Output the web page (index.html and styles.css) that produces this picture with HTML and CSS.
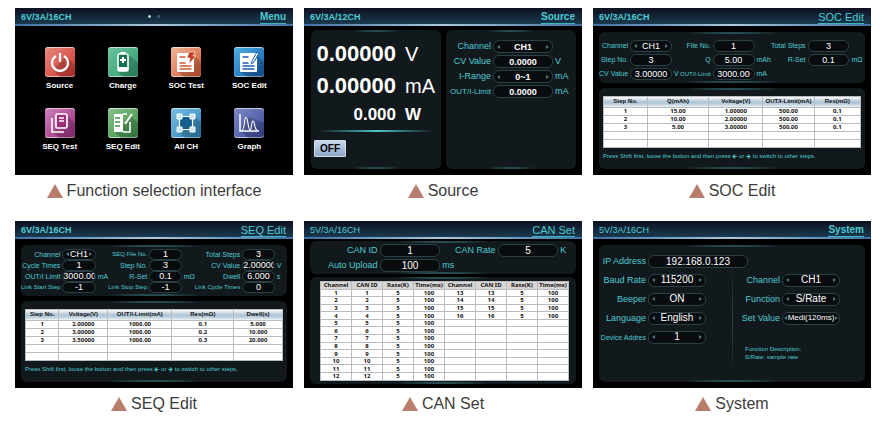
FILE: index.html
```
<!DOCTYPE html>
<html lang="en">
<head>
  <meta charset="UTF-8">
  <meta name="viewport" content="width=device-width, initial-scale=1.0">
  <title>Interface Overview</title>
  <link rel="stylesheet" href="styles.css">
</head>
<body>
  <main class="gallery">

    <!-- Menu -->
    <figure>
      <div class="screen">
        <header class="bar">
          <b>6V/3A/16CH</b>
          <span class="dots"><i class="on"></i><i></i></span>
          <strong>Menu</strong>
        </header>
        <nav class="menu">
          <a href="#source">
            <svg class="icon red" viewBox="0 0 30 30">
              <path class="shade" d="M21 9l9 9v12H15l-7-7z"/>
              <path d="M11 9a8 8 0 1 0 8 0M15 6v9" fill="none" stroke="#fff" stroke-width="2.2"/>
            </svg>
            Source
          </a>
          <a href="#charge">
            <svg class="icon green" viewBox="0 0 30 30">
              <path class="shade" d="M20 7l10 9v14H15l-5-5z"/>
              <rect x="10" y="7" width="10" height="17" rx="1.5" fill="#1a7350" stroke="#fff" stroke-width="1.6"/>
              <path d="M12.500 5h5v2h-5zM10 20h10v4H10z" fill="#fff"/>
              <path d="M15 10v6M12 13h6" stroke="#fff" stroke-width="2"/>
            </svg>
            Charge
          </a>
          <a href="#soc-test">
            <svg class="icon orange" viewBox="0 0 30 30">
              <path class="shade" d="M23 8l7 7v15H13l-6-5z"/>
              <rect x="6" y="6" width="17" height="19" rx="1" fill="#fff"/>
              <path d="M8.500 10h6M8.500 16h6M8.500 19h12M8.500 22h12" stroke="#cf5a36" stroke-width="1.300"/>
              <path d="M18 5h6l-2 4h3l-7 8 1-6h-3z" fill="#c33d1e" stroke="#fff" stroke-width=".6"/>
            </svg>
            SOC Test
          </a>
          <a href="#soc-edit">
            <svg class="icon blue" viewBox="0 0 30 30">
              <path class="shade" d="M23 8l7 7v15H13l-6-5z"/>
              <rect x="6" y="6" width="17" height="19" rx="1" fill="#fff"/>
              <path d="M8.500 10h6M8.500 16h6M8.500 19h12M8.500 22h12" stroke="#1f5fae" stroke-width="1.300"/>
              <path d="M23 5l-5 9-.5 3 2.500-2 5-9z" fill="#fff" stroke="#1a5ca8" stroke-width="1"/>
            </svg>
            SOC Edit
          </a>
          <a href="#seq-test">
            <svg class="icon purple" viewBox="0 0 30 30">
              <path class="shade" d="M22 7l8 8v15H14l-6-6z"/>
              <rect x="11" y="6" width="11" height="14" rx="1.500" fill="#9c2f76" stroke="#fff" stroke-width="1.700"/>
              <path d="M14 10h5M14 13h5M7 10v14h12" fill="none" stroke="#fff" stroke-width="1.600"/>
            </svg>
            SEQ Test
          </a>
          <a href="#seq-edit">
            <svg class="icon leaf" viewBox="0 0 30 30">
              <path class="shade" d="M23 8l7 7v15H13l-6-6z"/>
              <path d="M6 6h9v18H6z" fill="#fff"/>
              <path d="M15 6h4M15 24h7V14" fill="none" stroke="#fff" stroke-width="1.600"/>
              <path d="M7 10h5M7 14h5M7 18h5" stroke="#3f8d4a" stroke-width="1.400"/>
              <path d="M24 6l-7 10" stroke="#fff" stroke-width="2"/>
            </svg>
            SEQ Edit
          </a>
          <a href="#all">
            <svg class="icon sky" viewBox="0 0 30 30">
              <path class="shade" d="M23 7l7 7v16H14l-7-7z"/>
              <path d="M8.500 8.500h13v13h-13z" fill="#155f8f" stroke="#fff" stroke-width="1.200"/>
              <path d="M6 6h5v5H6zM19 6h5v5h-5zM6 19h5v5H6zM19 19h5v5h-5z" fill="#c9e4f3" stroke="#fff" stroke-width="1"/>
            </svg>
            All CH
          </a>
          <a href="#graph">
            <svg class="icon indigo" viewBox="0 0 30 30">
              <path class="shade" d="M12 8l18 7v15H14l-8-7z"/>
              <path d="M6 6v17h19" fill="none" stroke="#fff" stroke-width="1.500"/>
              <path d="M8 22c3 0 2-13 4-13s2 13 4 13 1-9 3-9 1 8 4 9" fill="none" stroke="#fff" stroke-width="1.100"/>
            </svg>
            Graph
          </a>
        </nav>
      </div>
      <figcaption>Function selection interface</figcaption>
    </figure>

    <!-- Source -->
    <figure>
      <div class="screen">
        <header class="bar">
          <b>6V/3A/12CH</b>
          <strong>Source</strong>
        </header>
        <div class="split">
          <section class="panel meter">
            <div class="readout">
              <span>0.00000</span><span class="unit">V</span>
              <span>0.00000</span><span class="unit">mA</span>
              <span class="power">0.000</span><span class="power">W</span>
            </div>
            <hr>
            <button type="button" class="off">OFF</button>
          </section>
          <section class="panel">
            <div class="fields source-fields">
              <label for="src-ch">Channel</label>
              <span class="pick"><select id="src-ch"><option>CH1</option></select></span>
              <span></span>
              <label for="src-cv">CV Value</label>
              <input id="src-cv" value="0.0000">
              <span>V</span>
              <label for="src-range">I-Range</label>
              <span class="pick"><select id="src-range"><option>0~1</option></select></span>
              <span>mA</span>
              <label for="src-limit" class="small">OUT/I-Limit</label>
              <input id="src-limit" value="0.0000">
              <span>mA</span>
            </div>
          </section>
        </div>
      </div>
      <figcaption>Source</figcaption>
    </figure>

    <!-- SOC Edit -->
    <figure>
      <div class="screen">
        <header class="bar">
          <b>6V/3A/16CH</b>
          <strong class="large">SOC Edit</strong>
        </header>
        <div class="stack">
          <section class="panel grow">
            <div class="fields soc-fields">
              <label for="soc-ch">Channel</label>
              <span class="pick"><select id="soc-ch"><option>CH1</option></select></span>
              <span></span>
              <label for="soc-file">File No.</label>
              <input id="soc-file" value="1">
              <span></span>
              <label for="soc-total">Total Steps</label>
              <input id="soc-total" value="3">
              <span></span>

              <label for="soc-step">Step No.</label>
              <input id="soc-step" value="3">
              <span></span>
              <label for="soc-q">Q</label>
              <input id="soc-q" value="5.00">
              <span>mAh</span>
              <label for="soc-r">R-Set</label>
              <input id="soc-r" value="0.1">
              <span>mΩ</span>

              <label for="soc-cv">CV Value</label>
              <input id="soc-cv" value="3.00000">
              <span>V</span>
              <label for="soc-limit" class="small">OUT/I-Limit</label>
              <input id="soc-limit" value="3000.00">
              <span>mA</span>
            </div>
          </section>
          <section class="panel listing">
            <table class="steps">
              <colgroup><col class="w17"><col class="w24"><col class="w21"><col class="w20"><col></colgroup>
              <thead>
                <tr><th>Step No.</th><th>Q(mAh)</th><th>Voltage(V)</th><th>OUT/I-Limit(mA)</th><th>Res(mΩ)</th></tr>
              </thead>
              <tbody>
                <tr><td>1</td><td>15.00</td><td>1.00000</td><td>500.00</td><td>0.1</td></tr>
                <tr><td>2</td><td>10.00</td><td>2.00000</td><td>500.00</td><td>0.1</td></tr>
                <tr><td>3</td><td>5.00</td><td>3.00000</td><td>500.00</td><td>0.1</td></tr>
                <tr><td></td><td></td><td></td><td></td><td></td></tr>
                <tr><td></td><td></td><td></td><td></td><td></td></tr>
              </tbody>
            </table>
            <p class="hint">Press Shift first, loose the button and then press 🡸 or 🡺 to switch to other steps.</p>
          </section>
        </div>
      </div>
      <figcaption>SOC Edit</figcaption>
    </figure>

    <!-- SEQ Edit -->
    <figure>
      <div class="screen">
        <header class="bar">
          <b>6V/3A/16CH</b>
          <strong class="large">SEQ Edit</strong>
        </header>
        <div class="stack">
          <section class="panel grow">
            <div class="fields seq-fields">
              <label for="seq-ch">Channel</label>
              <span class="pick"><select id="seq-ch"><option>CH1</option></select></span>
              <span></span>
              <label for="seq-file" class="small">SEQ File No.</label>
              <input id="seq-file" value="1">
              <span></span>
              <label for="seq-total">Total Steps</label>
              <input id="seq-total" value="3">
              <span></span>

              <label for="seq-cycle">Cycle Times</label>
              <input id="seq-cycle" value="1">
              <span></span>
              <label for="seq-step">Step No.</label>
              <input id="seq-step" value="3">
              <span></span>
              <label for="seq-cv">CV Value</label>
              <input id="seq-cv" value="2.00000">
              <span>V</span>

              <label for="seq-limit">OUT/I Limit</label>
              <input id="seq-limit" value="3000.00">
              <span>mA</span>
              <label for="seq-r">R-Set</label>
              <input id="seq-r" value="0.1">
              <span>mΩ</span>
              <label for="seq-dwell">Dwell</label>
              <input id="seq-dwell" value="6.000">
              <span>s</span>

              <label for="seq-start" class="small">Link Start Step</label>
              <input id="seq-start" value="-1">
              <span></span>
              <label for="seq-stop" class="small">Link Stop Step</label>
              <input id="seq-stop" value="-1">
              <span></span>
              <label for="seq-link" class="small">Link Cycle Times</label>
              <input id="seq-link" value="0">
              <span></span>
            </div>
          </section>
          <section class="panel listing">
            <table class="steps">
              <colgroup><col class="w13"><col class="w19"><col class="w25"><col class="w24"><col></colgroup>
              <thead>
                <tr><th>Step No.</th><th>Voltage(V)</th><th>OUT/I-Limit(mA)</th><th>Res(mΩ)</th><th>Dwell(s)</th></tr>
              </thead>
              <tbody>
                <tr><td>1</td><td>2.00000</td><td>1000.00</td><td>0.1</td><td>5.000</td></tr>
                <tr><td>2</td><td>3.00000</td><td>1000.00</td><td>0.2</td><td>10.000</td></tr>
                <tr><td>3</td><td>3.50000</td><td>1000.00</td><td>0.3</td><td>20.000</td></tr>
                <tr><td></td><td></td><td></td><td></td><td></td></tr>
                <tr><td></td><td></td><td></td><td></td><td></td></tr>
              </tbody>
            </table>
            <p class="hint">Press Shift first, loose the button and then press 🡸 or 🡺 to switch to other steps.</p>
          </section>
        </div>
      </div>
      <figcaption>SEQ Edit</figcaption>
    </figure>

    <!-- CAN Set -->
    <figure>
      <div class="screen">
        <header class="bar">
          <span>5V/3A/16CH</span>
          <strong class="large">CAN Set</strong>
        </header>
        <div class="stack tight">
          <section class="panel grow">
            <div class="fields can-fields">
              <label for="can-id">CAN ID</label>
              <input id="can-id" value="1">
              <span></span>
              <label for="can-rate">CAN Rate</label>
              <input id="can-rate" value="5">
              <span>K</span>
              <label for="can-auto">Auto Upload</label>
              <input id="can-auto" value="100">
              <span>ms</span>
            </div>
          </section>
          <section class="panel listing">
            <table class="can">
              <thead>
                <tr><th>Channel</th><th>CAN ID</th><th>Rate(K)</th><th>Time(ms)</th><th>Channel</th><th>CAN ID</th><th>Rate(K)</th><th>Time(ms)</th></tr>
              </thead>
              <tbody>
                <tr><td>1</td><td>1</td><td>5</td><td>100</td><td>13</td><td>13</td><td>5</td><td>100</td></tr>
                <tr><td>2</td><td>2</td><td>5</td><td>100</td><td>14</td><td>14</td><td>5</td><td>100</td></tr>
                <tr><td>3</td><td>3</td><td>5</td><td>100</td><td>15</td><td>15</td><td>5</td><td>100</td></tr>
                <tr><td>4</td><td>4</td><td>5</td><td>100</td><td>16</td><td>16</td><td>5</td><td>100</td></tr>
                <tr><td>5</td><td>5</td><td>5</td><td>100</td><td></td><td></td><td></td><td></td></tr>
                <tr><td>6</td><td>6</td><td>5</td><td>100</td><td></td><td></td><td></td><td></td></tr>
                <tr><td>7</td><td>7</td><td>5</td><td>100</td><td></td><td></td><td></td><td></td></tr>
                <tr><td>8</td><td>8</td><td>5</td><td>100</td><td></td><td></td><td></td><td></td></tr>
                <tr><td>9</td><td>9</td><td>5</td><td>100</td><td></td><td></td><td></td><td></td></tr>
                <tr><td>10</td><td>10</td><td>5</td><td>100</td><td></td><td></td><td></td><td></td></tr>
                <tr><td>11</td><td>11</td><td>5</td><td>100</td><td></td><td></td><td></td><td></td></tr>
                <tr><td>12</td><td>12</td><td>5</td><td>100</td><td></td><td></td><td></td><td></td></tr>
              </tbody>
            </table>
          </section>
        </div>
      </div>
      <figcaption>CAN Set</figcaption>
    </figure>

    <!-- System -->
    <figure>
      <div class="screen">
        <header class="bar">
          <span>5V/3A/16CH</span>
          <strong>System</strong>
        </header>
        <div class="stack">
          <section class="panel grow system">
            <div class="fields sys-fields">
              <label for="sys-ip">IP Address</label>
              <input id="sys-ip" class="wide" value="192.168.0.123">
              <label for="sys-baud">Baud Rate</label>
              <span class="pick"><select id="sys-baud"><option>115200</option></select></span>
              <label for="sys-beep">Beeper</label>
              <span class="pick"><select id="sys-beep"><option>ON</option></select></span>
              <label for="sys-lang">Language</label>
              <span class="pick"><select id="sys-lang"><option>English</option></select></span>
              <label for="sys-addr" class="small">Device Addres</label>
              <span class="pick"><select id="sys-addr"><option>1</option></select></span>
            </div>
            <div class="side">
              <div class="fields sys-fields">
                <label for="sys-ch">Channel</label>
                <span class="pick"><select id="sys-ch"><option>CH1</option></select></span>
                <label for="sys-fn">Function</label>
                <span class="pick"><select id="sys-fn"><option>S/Rate</option></select></span>
                <label for="sys-val">Set Value</label>
                <span class="pick long"><select id="sys-val"><option>Medi(120ms)</option></select></span>
              </div>
              <p>Function Description:<br>S/Rate: sample rate</p>
            </div>
          </section>
        </div>
      </div>
      <figcaption>System</figcaption>
    </figure>

  </main>
</body>
</html>
```
FILE: styles.css
```
* {
  box-sizing: border-box;
}
body {
  margin: 0;
  background: #fff;
  font-family: "Liberation Sans", Arial, sans-serif;
}
.gallery {
  display: grid;
  grid-template-columns: repeat(3, 1fr);
  column-gap: 11px;
  padding: 8px 14px 0 15px;
}
figure {
  margin: 0;
}
figcaption {
  display: flex;
  justify-content: center;
  align-items: center;
  gap: 4px;
  height: 46px;
  padding-bottom: 14px;
  font-size: 16px;
  color: #3c3c3c;
}
figcaption::before {
  content: "";
  border: 8px solid transparent;
  border-top: 0;
  border-bottom: 14px solid #b97d6e;
}

/* device screen */
.screen {
  display: flex;
  flex-direction: column;
  aspect-ratio: 5 / 3;
  background: #000;
  color: #4fcad2;
}
.bar {
  position: relative;
  display: flex;
  justify-content: space-between;
  align-items: flex-end;
  height: 18px;
  padding: 0 7px 0 6px;
  background: linear-gradient(#0d1020, #1a3a4e);
  border-bottom: 2px solid;
  border-image: linear-gradient(90deg, #3d6ea5, #a9cbe0 50%, #3d6ea5) 1;
  font-size: 9px;
  line-height: 13px;
}
.bar strong {
  font-size: 10px;
  line-height: 12px;
  border-bottom: 1px solid #3fb4ba;
}
.bar .large {
  font-size: 11px;
  font-weight: normal;
}
.dots {
  position: absolute;
  top: 7px;
  left: 48%;
  display: flex;
  gap: 6px;
}
.dots i {
  width: 3px;
  height: 3px;
  border: 1px solid #4b8a99;
  border-radius: 50%;
}
.dots .on {
  background: #c8f4fa;
  border-color: #c8f4fa;
}

/* menu */
.menu {
  display: grid;
  grid-template-columns: repeat(4, 1fr);
  row-gap: 16px;
  padding: 21px 12px 0 13px;
}
.menu a {
  display: flex;
  flex-direction: column;
  align-items: center;
  gap: 3px;
  font-size: 8px;
  font-weight: bold;
  line-height: 12px;
  color: #fff;
  text-decoration: none;
}
.icon {
  width: 30px;
  height: 30px;
  border-radius: 3px;
  box-shadow: inset 0 1px 0 #ffffff99, inset 0 -1px 0 #ffffff99;
}
.shade {
  fill: #000;
  opacity: 0.2;
}
.red { background: linear-gradient(135deg, #e88a80, #d0342a); }
.green { background: linear-gradient(135deg, #6cc4a0, #2c9a6c); }
.orange { background: linear-gradient(135deg, #f0b898, #d8532e); }
.blue { background: linear-gradient(135deg, #4cb2e4, #1458a8); }
.purple { background: linear-gradient(135deg, #cc80b8, #9c2c80); }
.leaf { background: linear-gradient(135deg, #88c08c, #3c9044); }
.sky { background: linear-gradient(135deg, #7cbce0, #2484bc); }
.indigo { background: linear-gradient(135deg, #7c88c4, #3c4c9c); }

/* panels */
.split {
  flex: 1;
  display: grid;
  grid-template-columns: 1fr 1fr;
  gap: 5px;
  padding: 4px 6px 6px 7px;
}
.stack {
  flex: 1;
  display: flex;
  flex-direction: column;
  gap: 5px;
  padding: 6px;
}
.tight {
  gap: 3px;
  padding: 2px 6px 4px;
}
.panel {
  position: relative;
  background: #12191c;
  border-radius: 6px;
}
.panel::before,
.panel::after {
  content: "";
  position: absolute;
  top: 0;
  left: 30%;
  width: 40%;
  height: 2px;
  background: radial-gradient(closest-side, #3a8084, transparent);
}
.panel::after {
  top: auto;
  bottom: 0;
}
.grow {
  flex: 1;
}

/* fields */
.fields {
  display: grid;
  align-items: center;
  font-size: 7px;
  line-height: 12px;
  white-space: nowrap;
}
.fields label {
  justify-self: end;
  padding-right: 2px;
}
.fields > span:not(.pick) {
  padding-left: 2px;
}
.fields .small {
  font-size: 6px;
}
input,
.pick {
  width: 100%;
  min-width: 0;
  height: 12px;
  padding: 0;
  background: #090c0f;
  border: 1px solid #2b3f47;
  border-radius: 6px;
}
input,
select {
  font-family: inherit;
  font-size: 9px;
  line-height: 10px;
  color: #fff;
  text-align: center;
}
.pick {
  display: flex;
  align-items: center;
  justify-content: space-between;
  padding: 0 3px;
}
.pick::before,
.pick::after {
  content: "";
  border: 2px solid transparent;
  border-right: 3px solid #4a777d;
  border-left: 0;
}
.pick::after {
  border-left: 3px solid #4a777d;
  border-right: 0;
}
select {
  flex: 1;
  min-width: 0;
  height: 10px;
  padding: 0;
  border: 0;
  background: none;
  appearance: none;
  text-align-last: center;
}

/* source */
.meter {
  padding: 8px 4px 0 5px;
}
.readout {
  display: grid;
  grid-template-columns: 80px 1fr;
  column-gap: 9px;
  align-items: center;
  font-size: 22px;
  font-weight: bold;
  line-height: 32px;
  color: #fff;
}
.readout span:nth-child(odd) {
  justify-self: end;
}
.readout .unit {
  font-size: 20px;
  font-weight: normal;
}
.readout .power {
  font-size: 17px;
  line-height: 26px;
}
hr {
  height: 2px;
  margin: 2px 2px 8px;
  border: 0;
  background: linear-gradient(90deg, transparent, #4cc3cb 50%, transparent);
}
.off {
  display: block;
  width: 32px;
  height: 17px;
  margin-left: -2px;
  padding: 0;
  background: linear-gradient(#c9d8ec, #8ea6c6);
  border: 1px solid #d5dfec;
  border-radius: 1px;
  font-family: inherit;
  font-size: 10px;
  font-weight: bold;
  color: #000;
}
.source-fields {
  grid-template-columns: 47fr 60fr 23fr;
  row-gap: 2px;
  padding-top: 10px;
  font-size: 9px;
  line-height: 13px;
}
.source-fields .small {
  font-size: 8px;
}
.source-fields input,
.source-fields .pick {
  height: 13px;
}
.source-fields input,
.source-fields select {
  font-weight: bold;
}

/* soc and seq */
.soc-fields {
  grid-template-columns: 32fr 43fr 6fr 35fr 43fr 14fr 34fr 43fr 16fr;
  row-gap: 2px;
  padding-top: 8px;
}
.seq-fields {
  grid-template-columns: 42fr 38fr 13fr 37fr 37fr 6fr 42fr 37fr 14fr;
  padding-top: 4px;
  line-height: 11px;
}
.seq-fields input,
.seq-fields .pick {
  height: 11px;
}
.seq-fields select {
  height: 9px;
}
.seq-fields input,
.seq-fields select {
  line-height: 9px;
}
.listing {
  padding: 8px 4px 0;
}
table {
  width: 100%;
  table-layout: fixed;
  border-collapse: collapse;
  background: #fff;
  font-family: "Noto Sans", sans-serif;
  font-size: 6px;
  font-weight: bold;
  line-height: 7px;
  text-align: center;
  color: #111;
}
th,
td {
  height: 8px;
  padding: 0;
  border: 1px solid #b9bdc2;
  white-space: nowrap;
}
.steps th {
  height: 11px;
  background: linear-gradient(#fff, #a9c0d3 60%, #dfe9f1);
  font-family: "Liberation Sans", Arial, sans-serif;
}
.w13 { width: 13%; }
.w17 { width: 17%; }
.w19 { width: 19%; }
.w20 { width: 20%; }
.w21 { width: 21%; }
.w24 { width: 24%; }
.w25 { width: 25%; }
.hint {
  margin: 0;
  padding: 4px 0 9px;
  font-size: 6px;
  line-height: 8px;
  white-space: nowrap;
}

/* can */
.can-fields {
  grid-template-columns: 71fr 62fr 15fr 39fr 62fr 18fr;
  row-gap: 2px;
  padding-top: 3px;
  font-size: 9px;
  line-height: 13px;
}
.can-fields input {
  height: 13px;
  font-size: 10px;
}
.tight .listing {
  padding: 4px 7px 3px 10px;
}
.can {
  height: 100px;
}
.can td {
  height: 7px;
  line-height: 6px;
}
.can th {
  background: #d9d6d6;
}

/* system */
.system {
  display: grid;
  grid-template-columns: 1fr 1fr;
  padding-top: 10px;
}
.sys-fields {
  grid-template-columns: 49px 58px;
  align-content: start;
  row-gap: 6px;
  font-size: 9px;
  line-height: 13px;
}
.sys-fields .small {
  font-size: 7px;
}
.sys-fields input,
.sys-fields .pick {
  height: 13px;
}
.sys-fields input,
.sys-fields select {
  font-size: 10px;
}
.sys-fields .wide {
  width: 100px;
}
.sys-fields .long {
  padding: 0 1px;
}
.sys-fields .long select {
  font-size: 8px;
}
.side {
  margin: 11px 0 8px;
  padding-top: 8px;
  border-left: 1px solid;
  border-image: linear-gradient(transparent, #33444a, transparent) 1;
}
.side p {
  margin: 20px 0 0 12px;
  font-size: 6px;
  line-height: 8px;
}
```
